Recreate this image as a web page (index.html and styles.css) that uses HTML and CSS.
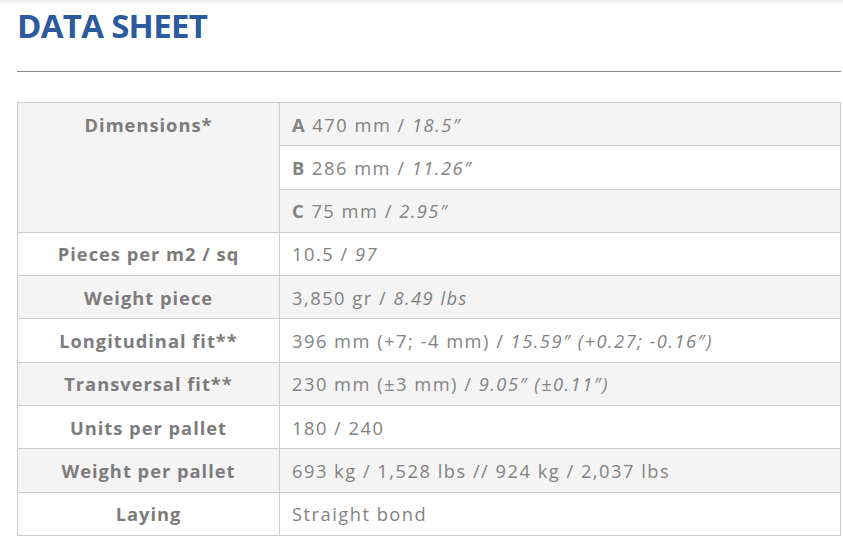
FILE: index.html
```html
<!DOCTYPE html>
<html>
<head>
<meta charset="utf-8">
<link rel="stylesheet" href="styles.css">
</head>
<body>
<div class="topshade"></div>
<main class="sheet">
  <h1 class="title">DATA SHEET</h1>
  <hr class="rule">
  <table class="specs">
    <colgroup><col class="c-label"><col class="c-value"></colgroup>
    <tbody>
      <tr class="odd"><th rowspan="3" class="odd">Dimensions*</th><td><b>A</b> 470 mm / <i>18.5″</i></td></tr>
      <tr class="even"><td><b>B</b> 286 mm / <i>11.26″</i></td></tr>
      <tr class="odd"><td><b>C</b> 75 mm / <i>2.95″</i></td></tr>
      <tr class="even"><th>Pieces per m2 / sq</th><td>10.5 / <i>97</i></td></tr>
      <tr class="odd"><th>Weight piece</th><td>3,850 gr / <i>8.49 lbs</i></td></tr>
      <tr class="even"><th>Longitudinal fit**</th><td>396 mm (+7; -4 mm) / <i>15.59″ (+0.27; -0.16″)</i></td></tr>
      <tr class="odd"><th>Transversal fit**</th><td>230 mm (±3 mm) / <i>9.05″ (±0.11″)</i></td></tr>
      <tr class="even"><th>Units per pallet</th><td>180 / 240</td></tr>
      <tr class="odd"><th>Weight per pallet</th><td>693 kg / 1,528 lbs // 924 kg / 2,037 lbs</td></tr>
      <tr class="even"><th>Laying</th><td>Straight bond</td></tr>
    </tbody>
  </table>
</main>
</body>
</html>
```
FILE: styles.css
```css
html, body {
  margin: 0;
  padding: 0;
  background: #ffffff;
}
body {
  font-family: "Open Sans", "DejaVu Sans", sans-serif;
  color: #777777;
  position: relative;
}
.topshade {
  position: absolute;
  left: 0;
  right: 0;
  top: 0;
  height: 6px;
  background: linear-gradient(#ececec, rgba(255,255,255,0));
}
.sheet {
  padding: 0 2px 0 17px;
}
.title {
  margin: 0;
  padding-top: 4px;
  font-size: 33px;
  line-height: 44px;
  font-weight: 700;
  letter-spacing: -0.7px;
  color: #2c5a9e;
}
.rule {
  margin: 23px 0 0 0;
  border: 0;
  border-top: 1px solid #8a8a8a;
  height: 0;
}
.specs {
  margin-top: 30px;
  width: 100%;
  border-collapse: collapse;
  font-size: 18.3px;
  line-height: 22.3px;
}
.c-label { width: 262px; }
.specs th, .specs td {
  border: 1px solid #cccccc;
  padding: 10.5px 12px 9.5px;
  vertical-align: top;
  color: #828282;
}
.specs th {
  font-weight: 700;
  text-align: center;
  letter-spacing: 1px;
  color: #7c7c7c;
}
.specs td {
  text-align: left;
  font-weight: 400;
  letter-spacing: 1.5px;
}
.specs td b { font-weight: 700; }
.specs tr.odd td, .specs tr.odd th { background: #f4f4f4; }
.specs tr.even td, .specs tr.even th { background: #ffffff; }
.specs th.odd { background: #f4f4f4; }
```
